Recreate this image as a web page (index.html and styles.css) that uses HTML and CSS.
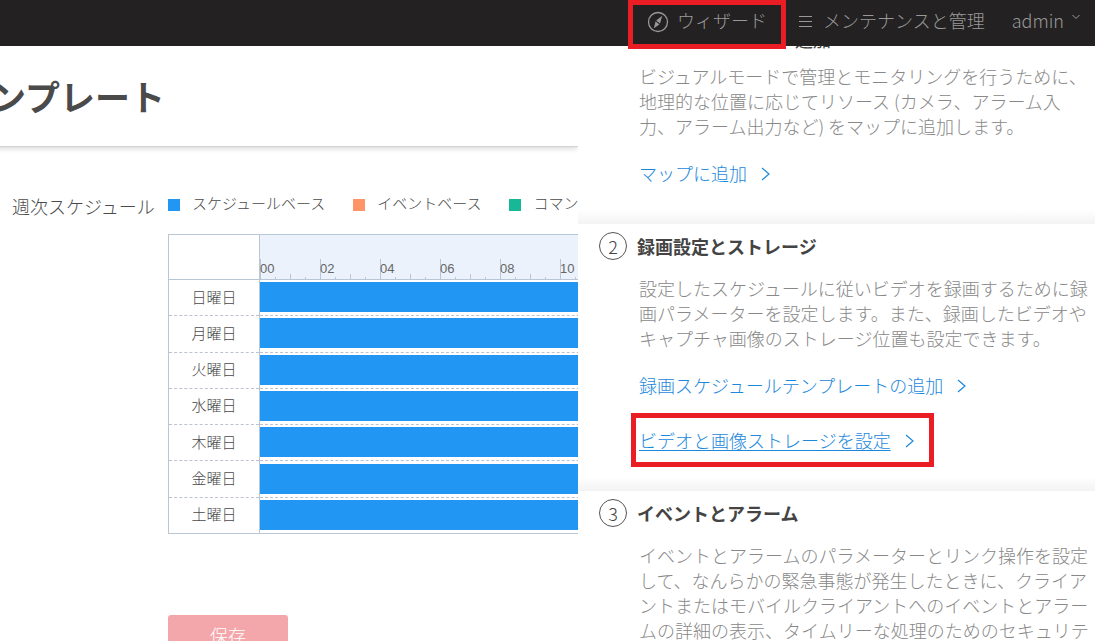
FILE: index.html
```html
<!DOCTYPE html>
<html lang="ja">
<head>
<meta charset="utf-8">
<title>テンプレート</title>
<link rel="stylesheet" href="styles.css">
</head>
<body>
<header class="topbar">
  <nav class="nav">
    <a class="nav-item marked" href="#"><svg class="compass" viewBox="0 0 22 22" aria-hidden="true"><circle cx="11" cy="11" r="9.5" fill="none" stroke="currentColor" stroke-width="1.3"/><path d="M15.2 4.8 13 12.6 9.2 9.4Z M6.8 17.2 8.6 10.2 12.4 13.4Z" fill="currentColor"/></svg>ウィザード</a>
    <a class="nav-item" href="#"><svg class="menu-icon" viewBox="0 0 14 14" aria-hidden="true"><path d="M0 2.5h13M0 7.5h13M0 12.5h13" stroke="currentColor" fill="none"/></svg>メンテナンスと管理</a>
    <button class="nav-item user" type="button">admin<svg class="caret" viewBox="0 0 8 6" aria-hidden="true"><path d="M.5 1 4 4.5 7.5 1" fill="none" stroke="currentColor"/></svg></button>
  </nav>
</header>
<div class="layout">
  <main class="main">
    <h1 class="title">ンプレート</h1>
    <div class="schedule">
      <h2 class="label">週次スケジュール</h2>
      <div class="content">
        <ul class="legend">
          <li><i class="swatch blue"></i>スケジュールベース</li>
          <li><i class="swatch orange"></i>イベントベース</li>
          <li><i class="swatch green"></i>コマン</li>
        </ul>
        <table class="week">
          <thead>
            <tr><td class="corner"></td><th class="ruler"><div class="hours"><span>00</span><span>02</span><span>04</span><span>06</span><span>08</span><span>10</span></div></th></tr>
          </thead>
          <tbody>
            <tr><th>日曜日</th><td><div class="bar"></div></td></tr>
            <tr><th>月曜日</th><td><div class="bar"></div></td></tr>
            <tr><th>火曜日</th><td><div class="bar"></div></td></tr>
            <tr><th>水曜日</th><td><div class="bar"></div></td></tr>
            <tr><th>木曜日</th><td><div class="bar"></div></td></tr>
            <tr><th>金曜日</th><td><div class="bar"></div></td></tr>
            <tr><th>土曜日</th><td><div class="bar"></div></td></tr>
          </tbody>
        </table>
        <button class="save" type="button">保存</button>
      </div>
    </div>
  </main>
  <aside class="wizard">
    <section class="step first">
      <h2 class="step-title">追加</h2>
      <p>ビジュアルモードで管理とモニタリングを行うために、地理的な位置に応じてリソース (カメラ、アラーム入力、アラーム出力など) をマップに追加します。</p>
      <a class="link" href="#"><span>マップに追加</span><svg class="chevron" viewBox="0 0 9 14" aria-hidden="true"><path d="M1 1 8 7 1 13" fill="none" stroke="currentColor" stroke-width="1.2"/></svg></a>
    </section>
    <section class="step">
      <h2 class="step-title"><span class="number">2</span>録画設定とストレージ</h2>
      <p>設定したスケジュールに従いビデオを録画するために録画パラメーターを設定します。また、録画したビデオやキャプチャ画像のストレージ位置も設定できます。</p>
      <a class="link" href="#"><span>録画スケジュールテンプレートの追加</span><svg class="chevron" viewBox="0 0 9 14" aria-hidden="true"><path d="M1 1 8 7 1 13" fill="none" stroke="currentColor" stroke-width="1.2"/></svg></a>
      <a class="link active marked" href="#"><span>ビデオと画像ストレージを設定</span><svg class="chevron" viewBox="0 0 9 14" aria-hidden="true"><path d="M1 1 8 7 1 13" fill="none" stroke="currentColor" stroke-width="1.2"/></svg></a>
    </section>
    <section class="step">
      <h2 class="step-title"><span class="number">3</span>イベントとアラーム</h2>
      <p>イベントとアラームのパラメーターとリンク操作を設定して、なんらかの緊急事態が発生したときに、クライアントまたはモバイルクライアントへのイベントとアラームの詳細の表示、タイムリーな処理のためのセキュリテ</p>
    </section>
  </aside>
</div>
</body>
</html>
```
FILE: styles.css
```css
* { box-sizing: border-box; }
html, body { height: 100%; }
body {
  margin: 0;
  display: flex;
  flex-direction: column;
  overflow: hidden;
  background: #fff;
  color: #4a4a4a;
  font-family: "Noto Sans CJK JP", sans-serif;
  font-weight: 300;
}
h1, h2, p, ul { margin: 0; padding: 0; }
a { color: inherit; text-decoration: none; }
button { font: inherit; border: 0; }

.topbar {
  position: relative;
  z-index: 2;
  flex: none;
  height: 46px;
  background: #242122;
}
.nav {
  height: 100%;
  display: flex;
  justify-content: flex-end;
  padding-right: 15px;
}
.nav-item {
  display: flex;
  align-items: center;
  height: 39px;
  padding: 0;
  background: none;
  color: #999;
  font-size: 18px;
  white-space: nowrap;
}
.nav-item + .nav-item { margin-left: 32px; }
.nav-item.user { margin-left: 27px; }
.compass { width: 22px; height: 22px; margin: 4px 8px 0 0; }
.menu-icon { width: 14px; height: 14px; margin: 2px 10px 0 0; }
.caret { width: 8px; height: 6px; margin: 0 0 6px 8px; }

.marked { position: relative; }
.marked::after {
  content: "";
  position: absolute;
  border: 5px solid #ea1c24;
}
.nav-item.marked::after { inset: 0 -19px -10px -19px; }
.link.marked::after { inset: -14px -20px -14px -8px; }

.layout { flex: 1; min-height: 0; display: flex; }
.main { flex: 1; min-width: 0; overflow: hidden; }
.title {
  height: 101px;
  padding-top: 24px;
  margin-left: -9px;
  border-bottom: 1px solid #d2d2d2;
  box-shadow: 0 2px 5px #ddd;
  font-size: 35px;
  line-height: 52px;
  font-weight: 700;
  white-space: nowrap;
}
.schedule { display: flex; padding: 45px 0 0 12px; }
.label {
  flex: none;
  width: 156px;
  padding-top: 1px;
  font-size: 18px;
  line-height: 26px;
  font-weight: 300;
  white-space: nowrap;
}
.content { flex: none; }
.legend {
  display: flex;
  gap: 28px;
  list-style: none;
  font-size: 15px;
  line-height: 22px;
}
.legend li { display: flex; align-items: center; }
.swatch { width: 12px; height: 12px; margin: 3px 12px 0 0; }
.blue { background: #2196f3; }
.orange { background: #ff9567; }
.green { background: #18b795; }

.week {
  height: 300px;
  margin-top: 20px;
  border-collapse: collapse;
  border: 1px solid #b9c6d6;
}
.week th, .week td { padding: 0; font-weight: 300; }
.week thead tr { height: 45px; }
.week tbody tr { border-top: 1px dashed #bcc3cf; }
.week tbody tr:first-child { border-top: 1px solid #b9c6d6; }
.week tbody th { width: 91px; padding-bottom: 2px; font-size: 15px; line-height: 22px; }
.week tbody th, .corner { border-right: 1px solid #b9c6d6; }
.week tbody td { padding-bottom: 1px; }
.week .ruler { background: #ebf2fb; vertical-align: bottom; }
.hours { display: flex; }
.hours span {
  width: 60px;
  height: 20px;
  text-align: left;
  font: 13px/20px "Liberation Sans", sans-serif;
  color: #666;
  background:
    linear-gradient(#b9c6d6, #b9c6d6) 0 0 / 1px 20px no-repeat,
    linear-gradient(#b9c6d6, #b9c6d6) 15px 100% / 1px 2px no-repeat,
    linear-gradient(#b9c6d6, #b9c6d6) 30px 100% / 1px 5px no-repeat,
    linear-gradient(#b9c6d6, #b9c6d6) 45px 100% / 1px 2px no-repeat;
}
.bar { height: 30px; margin-left: -1px; background: #2196f3; }
.save {
  display: block;
  width: 120px;
  height: 40px;
  margin-top: 81px;
  padding: 0;
  border-radius: 3px;
  background: #f4a7aa;
  color: #fff;
  font-size: 18px;
}

.wizard { flex: none; width: 517px; overflow: hidden; background: #fff; }
.step {
  padding: 8px 4px 38px 61px;
  background: linear-gradient(#fff, #f3f3f3) bottom / 100% 14px no-repeat;
}
.step.first { padding-top: 0; margin-top: -21px; }
.step-title {
  display: flex;
  align-items: center;
  height: 28px;
  margin: 0 0 16px -2px;
  font-size: 18px;
  font-weight: 700;
  color: #444;
}
.first .step-title { margin: 0 0 11px 156px; font-weight: 400; }
.number {
  display: flex;
  align-items: center;
  justify-content: center;
  width: 28px;
  height: 28px;
  margin: 0 10px 0 -38px;
  border: 1px solid #555;
  border-radius: 50%;
  font-weight: 300;
}
.step p { font-size: 18px; line-height: 25px; color: #888; }
.link {
  display: flex;
  width: fit-content;
  align-items: center;
  gap: 14px;
  margin-top: 21px;
  font-size: 18px;
  line-height: 26px;
  color: #1c88dc;
}
.link + .link { margin-top: 29px; }
.link.active span { text-decoration: underline; text-underline-offset: 2px; }
.chevron { width: 9px; height: 14px; margin-top: 2px; }
```
